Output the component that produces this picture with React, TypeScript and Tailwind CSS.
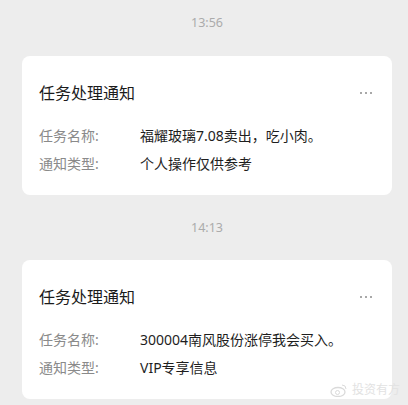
import React from "react";

const font = { fontFamily: '"Noto Sans", "Noto Sans CJK SC", sans-serif' };

type Row = { label: string; value: string };

function Card({ rows }: { rows: Row[] }) {
  return (
    <div className="relative bg-white rounded-[8px] h-[139px] pl-[17px] pr-[20px] pt-[25px]">
      <div className="flex items-center justify-between h-[24px]">
        <div className="text-[16px] leading-[24px] text-[#1b1b1b]">任务处理通知</div>
        <div className="flex gap-[3px] items-center pr-[0px] mr-[0px]">
          <span className="w-[2px] h-[2px] bg-[#a8a8a8]" />
          <span className="w-[2px] h-[2px] bg-[#a8a8a8]" />
          <span className="w-[2px] h-[2px] bg-[#a8a8a8]" />
        </div>
      </div>
      <div className="mt-[16px]">
        {rows.map((r) => (
          <div key={r.label} className="flex h-[28px] items-center text-[14px]">
            <div className="w-[101px] text-[#8a8a8a]">{r.label}</div>
            <div className="text-[#1e1e1e]">{r.value}</div>
          </div>
        ))}
      </div>
    </div>
  );
}

function Time({ t }: { t: string }) {
  return (
    <div className="h-[20px] leading-[20px] text-center text-[12.5px] text-[#ababab]">{t}</div>
  );
}

export default function App() {
  return (
    <div
      className="relative w-[408px] h-[405px] overflow-hidden bg-[#ededed] pl-[22px] pr-[16px] pt-[13px]"
      style={font}
    >
      <Time t="13:56" />
      <div className="mt-[23px]">
        <Card
          rows={[
            { label: "任务名称:", value: "福耀玻璃7.08卖出，吃小肉。" },
            { label: "通知类型:", value: "个人操作仅供参考" },
          ]}
        />
      </div>
      <div className="mt-[23px]">
        <Time t="14:13" />
      </div>
      <div className="mt-[22px]">
        <Card
          rows={[
            { label: "任务名称:", value: "300004南风股份涨停我会买入。" },
            { label: "通知类型:", value: "VIP专享信息" },
          ]}
        />
      </div>
      <div className="absolute left-[330px] top-[381px] flex items-center gap-[4px] text-[12px] text-[#e2e2e2]">
        <svg width="18" height="14" viewBox="0 0 18 14">
          <ellipse cx="8" cy="9" rx="7" ry="4.5" fill="none" stroke="#dadada" strokeWidth="1.3" />
          <circle cx="7.5" cy="9.5" r="2" fill="none" stroke="#dadada" strokeWidth="1" />
          <path d="M12 2 a4 4 0 0 1 4 4" fill="none" stroke="#dadada" strokeWidth="1" />
        </svg>
        <span>投资有方</span>
      </div>
    </div>
  );
}
